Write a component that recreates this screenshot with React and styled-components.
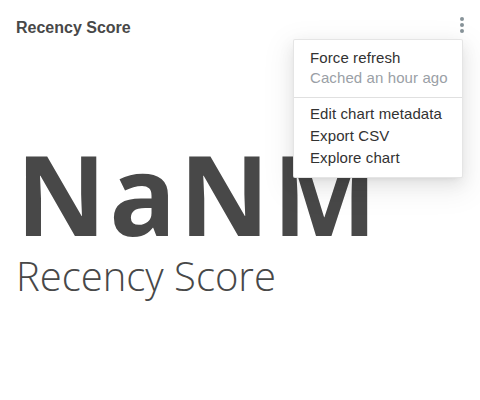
import React from 'react'
import styled, { createGlobalStyle } from 'styled-components'

const GlobalStyle = createGlobalStyle`
  html, body {
    margin: 0;
    padding: 0;
    background: #fff;
  }
  body {
    font-family: "Liberation Sans", Arial, sans-serif;
    color: #484848;
  }
`

const menuGroups = [
  [
    { label: 'Force refresh' },
    { label: 'Cached an hour ago', muted: true },
  ],
  [
    { label: 'Edit chart metadata' },
    { label: 'Export CSV' },
    { label: 'Explore chart' },
  ],
]

function App() {
  return (
    <Page>
      <GlobalStyle />
      <Header>
        <Title>Recency Score</Title>
        <MenuAnchor>
          <KebabButton aria-label="More options">
            <Dot />
            <Dot />
            <Dot />
          </KebabButton>
          <Menu>
            {menuGroups.map((group, i) => (
              <React.Fragment key={i}>
                {i > 0 && <Divider />}
                <Group first={i === 0}>
                  {group.map((item) => (
                    <MenuItem key={item.label} muted={item.muted}>
                      {item.label}
                    </MenuItem>
                  ))}
                </Group>
              </React.Fragment>
            ))}
          </Menu>
        </MenuAnchor>
      </Header>
      <BigNumber>
        <Value>NaNM</Value>
        <Subheader>Recency Score</Subheader>
      </BigNumber>
    </Page>
  )
}

export default App

const Page = styled.div`
  width: 480px;
  height: 400px;
  box-sizing: border-box;
  overflow: hidden;
`
const Header = styled.div`
  display: flex;
  justify-content: space-between;
  align-items: flex-start;
  padding: 16px 12px 0 16px;
`
const Title = styled.div`
  font-family: "Liberation Sans", Arial, sans-serif;
  font-weight: 700;
  font-size: 16px;
  line-height: 24px;
  color: #484848;
`
const MenuAnchor = styled.div`
  position: relative;
`
const KebabButton = styled.div`
  width: 12px;
  height: 18px;
  display: flex;
  flex-direction: column;
  align-items: center;
  justify-content: center;
  gap: 2px;
  cursor: pointer;
`
const Dot = styled.span`
  width: 4px;
  height: 4px;
  border-radius: 50%;
  background: #879399;
`
const Menu = styled.div`
  position: absolute;
  top: 23px;
  right: 5px;
  width: 170px;
  box-sizing: border-box;
  padding: 4px 0;
  background: #fff;
  border: 1px solid rgba(0, 0, 0, 0.1);
  border-radius: 2px;
  box-shadow: 0 3px 6px -4px rgba(0, 0, 0, 0.12), 0 6px 16px 0 rgba(0, 0, 0, 0.08),
    0 9px 28px 8px rgba(0, 0, 0, 0.05);
  z-index: 10;
`
const Group = styled.div`
  padding: ${(p) => (p.first ? '4px 0 5px' : '5px 0 4px')};
  line-height: ${(p) => (p.first ? '20px' : '22px')};
`
const MenuItem = styled.div`
  padding: 0 16px;
  font-family: "Liberation Sans", Arial, sans-serif;
  font-size: 15px;
  letter-spacing: 0.1px;
  color: ${(p) => (p.muted ? '#9aa0a6' : '#323232')};
  white-space: nowrap;
  cursor: ${(p) => (p.muted ? 'default' : 'pointer')};
`
const Divider = styled.div`
  height: 1px;
  margin-top: 4px;
  background: #e0e0e0;
`
const BigNumber = styled.div`
  padding: 0 16px;
  margin-top: 98px;
  color: #484848;
`
const Value = styled.div`
  font-family: "Open Sans", "Noto Sans", sans-serif;
  font-weight: 700;
  font-size: 111px;
  line-height: 111px;
  letter-spacing: 3px;
`
const Subheader = styled.div`
  font-family: "Open Sans", "Noto Sans", sans-serif;
  font-weight: 300;
  font-size: 40px;
  line-height: 40px;
  margin-top: 7px;
`
